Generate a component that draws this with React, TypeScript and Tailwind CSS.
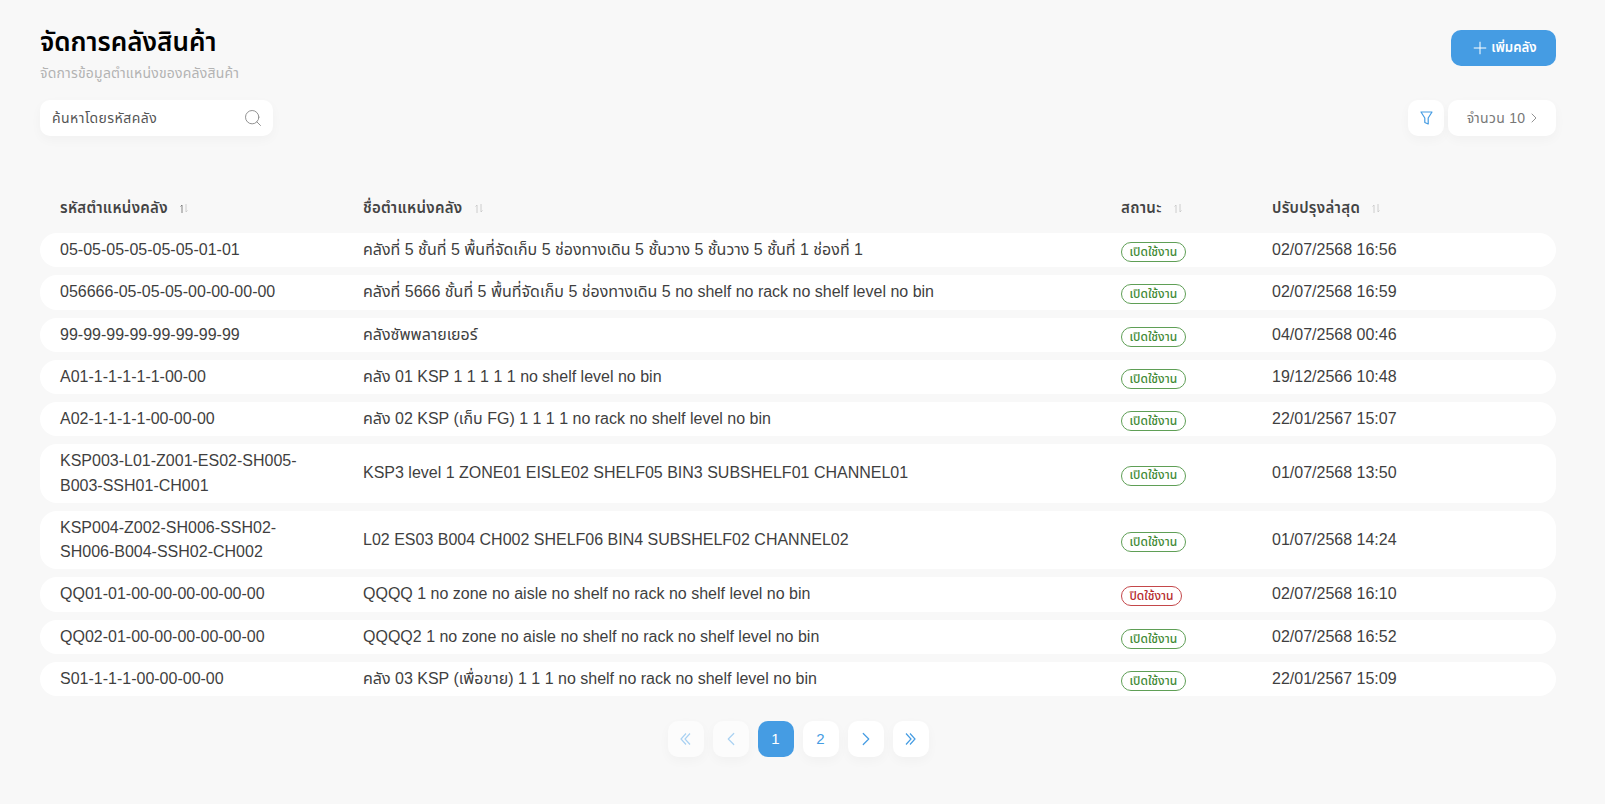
import { ChevronLeft, ChevronRight, Plus, Search } from "lucide-react";

type Row = {
  code: string;
  name: string;
  active: boolean;
  updated: string;
};

const rows: Row[] = [
  { code: "05-05-05-05-05-05-01-01", name: "คลังที่ 5 ชั้นที่ 5 พื้นที่จัดเก็บ 5 ช่องทางเดิน 5 ชั้นวาง 5 ชั้นวาง 5 ชั้นที่ 1 ช่องที่ 1", active: true, updated: "02/07/2568 16:56" },
  { code: "056666-05-05-05-00-00-00-00", name: "คลังที่ 5666 ชั้นที่ 5 พื้นที่จัดเก็บ 5 ช่องทางเดิน 5 no shelf no rack no shelf level no bin", active: true, updated: "02/07/2568 16:59" },
  { code: "99-99-99-99-99-99-99-99", name: "คลังซัพพลายเยอร์", active: true, updated: "04/07/2568 00:46" },
  { code: "A01-1-1-1-1-1-00-00", name: "คลัง 01 KSP 1 1 1 1 1 no shelf level no bin", active: true, updated: "19/12/2566 10:48" },
  { code: "A02-1-1-1-1-00-00-00", name: "คลัง 02 KSP (เก็บ FG) 1 1 1 1 no rack no shelf level no bin", active: true, updated: "22/01/2567 15:07" },
  { code: "KSP003-L01-Z001-ES02-SH005-B003-SSH01-CH001", name: "KSP3 level 1 ZONE01 EISLE02 SHELF05 BIN3 SUBSHELF01 CHANNEL01", active: true, updated: "01/07/2568 13:50" },
  { code: "KSP004-Z002-SH006-SSH02-SH006-B004-SSH02-CH002", name: "L02 ES03 B004 CH002 SHELF06 BIN4 SUBSHELF02 CHANNEL02", active: true, updated: "01/07/2568 14:24" },
  { code: "QQ01-01-00-00-00-00-00-00", name: "QQQQ 1 no zone no aisle no shelf no rack no shelf level no bin", active: false, updated: "02/07/2568 16:10" },
  { code: "QQ02-01-00-00-00-00-00-00", name: "QQQQ2 1 no zone no aisle no shelf no rack no shelf level no bin", active: true, updated: "02/07/2568 16:52" },
  { code: "S01-1-1-1-00-00-00-00", name: "คลัง 03 KSP (เพื่อขาย) 1 1 1 no shelf no rack no shelf level no bin", active: true, updated: "22/01/2567 15:09" },
];

const columns = [
  { label: "รหัสตำแหน่งคลัง", width: "w-[303px]", sorted: true },
  { label: "ชื่อตำแหน่งคลัง", width: "w-[758px]", sorted: false },
  { label: "สถานะ", width: "w-[151px]", sorted: false },
  { label: "ปรับปรุงล่าสุด", width: "", sorted: false },
];

function SortIcon({ sorted }: { sorted: boolean }) {
  return (
    <svg width="8" height="9" viewBox="0 0 8 9" fill="none" strokeWidth="0.9" className="ml-[12px] shrink-0">
      <path d="M2 9V1L0.5 2.5" stroke={sorted ? "#777777" : "#c8c8c8"} />
      <path d="M6 0v8L7.5 6.5" stroke="#c8c8c8" />
    </svg>
  );
}

function FunnelIcon() {
  return (
    <svg width="13" height="14" viewBox="0 0 13 14" fill="none" stroke="currentColor" strokeWidth="1.2" strokeLinejoin="round">
      <path d="M1 1h11L8.2 7v6L4.8 11.5V7z" />
    </svg>
  );
}

function DoubleChevron({ flip }: { flip?: boolean }) {
  return (
    <svg width="11" height="12" viewBox="0 0 11 12" fill="none" stroke="currentColor" strokeWidth="1.2" className={flip ? "rotate-180" : ""}>
      <path d="M1 .5 6 6l-5 5.5" />
      <path d="M5 .5 10 6l-5 5.5" />
    </svg>
  );
}

function StatusBadge({ active }: { active: boolean }) {
  if (active) {
    return (
      <span className="inline-flex h-[20px] items-center rounded-full border border-[#5f9f56] px-[7.5px] text-[12px] font-medium text-[#3f8a35]">
        เปิดใช้งาน
      </span>
    );
  }
  return (
    <span className="inline-flex h-[20px] items-center rounded-full border border-[#c4474a] px-[7.5px] text-[12px] font-medium text-[#b5282c]">
      ปิดใช้งาน
    </span>
  );
}

function PageButton({ children, active, disabled }: { children: React.ReactNode; active?: boolean; disabled?: boolean }) {
  return (
    <button
      className={
        active
          ? "flex size-9 items-center justify-center rounded-[10px] bg-[#459ce3] text-[15px] font-medium text-white"
          : disabled
            ? "flex size-9 items-center justify-center rounded-[10px] bg-white/50 text-[#a9d1f2] shadow-[0_4px_12px_rgba(0,0,0,0.03)]"
            : "flex size-9 items-center justify-center rounded-[10px] bg-white text-[15px] text-[#459ce3] shadow-[0_4px_12px_rgba(0,0,0,0.03)]"
      }
    >
      {children}
    </button>
  );
}

export default function App() {
  return (
    <div className="min-h-[804px] bg-[#f8f8f8] pt-[24px] pr-[49px] pl-10 font-['Liberation_Sans','Noto_Sans_Thai','Noto_Sans',sans-serif] text-[#3f3f3f]">
      <div className="flex items-start justify-between">
        <div>
          <h1 className="text-[26px] leading-[36px] font-semibold text-black">จัดการคลังสินค้า</h1>
          <p className="mt-[3px] text-[14px] leading-[20px] tracking-[0.2px] text-[#b3b3b3]">จัดการข้อมูลตำแหน่งของคลังสินค้า</p>
        </div>
        <button className="mt-[6px] flex h-9 w-[105px] items-center justify-center gap-[1px] rounded-[10px] bg-[#459ce3] text-[13.2px] font-semibold text-white">
          <Plus size={20} strokeWidth={1.2} />
          เพิ่มคลัง
        </button>
      </div>

      <div className="mt-[17px] flex items-center justify-between">
        <div className="flex h-9 w-[233px] items-center justify-between rounded-[10px] bg-white pr-[10px] pl-3 shadow-[0_4px_12px_rgba(0,0,0,0.03)]">
          <span className="text-[14px] tracking-[0.45px] text-[#555]">ค้นหาโดยรหัสคลัง</span>
          <Search size={20} strokeWidth={1.1} className="text-[#888]" />
        </div>
        <div className="flex items-center gap-1">
          <button className="flex size-9 items-center justify-center rounded-[10px] bg-white text-[#459ce3] shadow-[0_4px_12px_rgba(0,0,0,0.03)]">
            <FunnelIcon />
          </button>
          <button className="flex h-9 w-[108px] items-center justify-center gap-[1px] rounded-[10px] bg-white pl-[5px] text-[14px] tracking-[0.3px] text-[#777] shadow-[0_4px_12px_rgba(0,0,0,0.03)]">
            จำนวน 10
            <ChevronRight size={16} strokeWidth={1.2} />
          </button>
        </div>
      </div>

      <table className="mt-[44px] w-full table-fixed border-separate border-spacing-y-2">
        <thead>
          <tr>
            {columns.map((col) => (
              <th key={col.label} className={`${col.width} h-[37px] px-5 pt-[3px] text-left text-[15px] font-semibold tracking-[0.3px] text-[#444]`}>
                <span className="flex items-center">
                  {col.label}
                  <SortIcon sorted={col.sorted} />
                </span>
              </th>
            ))}
          </tr>
        </thead>
        <tbody>
          {rows.map((row) => (
            <tr key={row.code} className="bg-white">
              <td className="rounded-l-[17px] px-5 py-[5px] text-[16px] leading-[24.25px]">{row.code}</td>
              <td className="px-5 py-[5px] text-[16px] leading-[24.25px]">{row.name}</td>
              <td className="px-5 pt-[6px] pb-[4px] leading-[24.25px]">
                <StatusBadge active={row.active} />
              </td>
              <td className="rounded-r-[17px] px-5 py-[5px] text-[16px] leading-[24.25px]">{row.updated}</td>
            </tr>
          ))}
        </tbody>
      </table>

      <div className="mt-[17px] flex items-center justify-center gap-[9px]">
        <PageButton disabled><DoubleChevron flip /></PageButton>
        <PageButton disabled><ChevronLeft size={22} strokeWidth={1.3} /></PageButton>
        <PageButton active>1</PageButton>
        <PageButton>2</PageButton>
        <PageButton><ChevronRight size={22} strokeWidth={1.3} /></PageButton>
        <PageButton><DoubleChevron /></PageButton>
      </div>
    </div>
  );
}
